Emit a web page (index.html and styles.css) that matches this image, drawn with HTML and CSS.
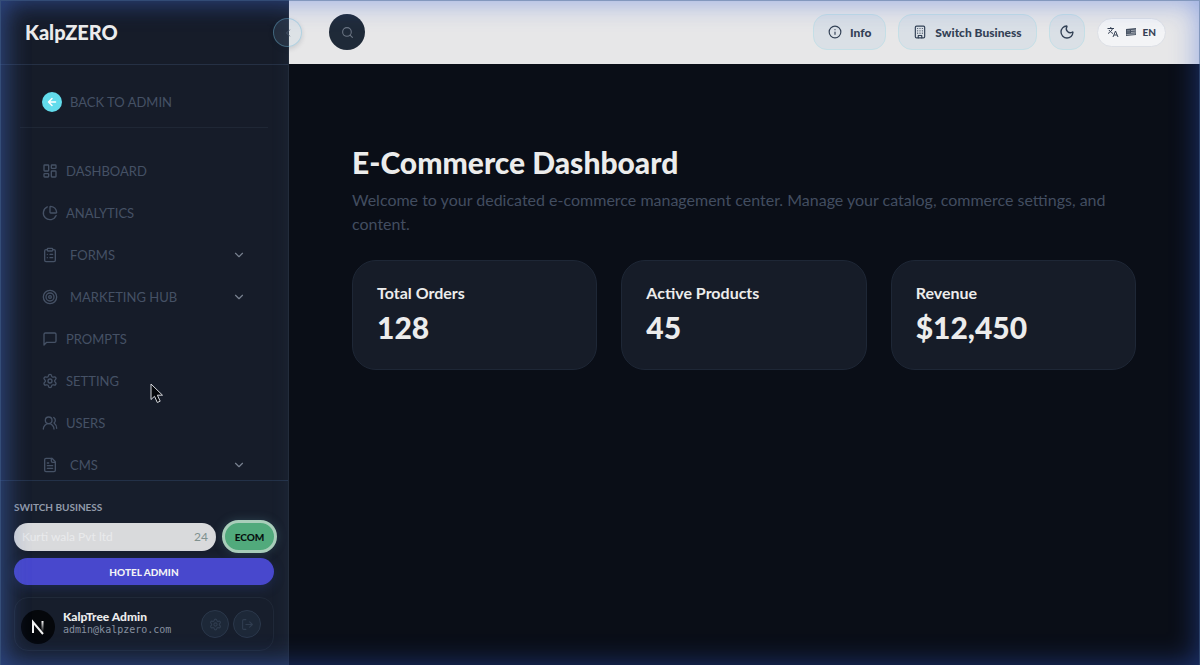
FILE: index.html
```html
<!DOCTYPE html>
<html lang="en">
<head>
<meta charset="utf-8">
<meta name="viewport" content="width=device-width, initial-scale=1">
<title>E-Commerce Dashboard</title>
<link rel="stylesheet" href="styles.css">
</head>
<body>
<div class="app">
  <aside class="sidebar">
    <div class="brand-bar">
      <a class="brand" href="#">KalpZERO</a>
      <button class="collapse" type="button" aria-label="Collapse sidebar"><svg class="icon icon-xs" viewBox="0 0 24 24"><path d="m15 18-6-6 6-6"/></svg></button>
    </div>
    <nav class="nav" aria-label="Main">
      <div class="nav-back">
        <a class="back-link" href="#"><span class="back-dot"><svg class="icon icon-xs" viewBox="0 0 24 24"><path d="m12 19-7-7 7-7M19 12H5"/></svg></span>BACK TO ADMIN</a>
      </div>
      <div class="nav-list">
        <a class="nav-item" href="#"><svg class="icon" viewBox="0 0 24 24"><rect width="7" height="9" x="3" y="3" rx="1"/><rect width="7" height="5" x="14" y="3" rx="1"/><rect width="7" height="9" x="14" y="12" rx="1"/><rect width="7" height="5" x="3" y="16" rx="1"/></svg>DASHBOARD</a>
        <a class="nav-item" href="#"><svg class="icon" viewBox="0 0 24 24"><path d="M21 12c.55 0 1-.45.95-1a10 10 0 0 0-8.95-8.95c-.55-.05-1 .4-1 .95v8a1 1 0 0 0 1 1z"/><path d="M21.21 15.89A10 10 0 1 1 8 2.83"/></svg>ANALYTICS</a>
        <button class="nav-item nav-group" type="button"><svg class="icon" viewBox="0 0 24 24"><rect width="8" height="4" x="8" y="2" rx="1"/><path d="M16 4h2a2 2 0 0 1 2 2v14a2 2 0 0 1-2 2H6a2 2 0 0 1-2-2V6a2 2 0 0 1 2-2h2M12 11h4M12 16h4M8 11h.01M8 16h.01"/></svg>FORMS<svg class="icon chevron" viewBox="0 0 24 24"><path d="m6 9 6 6 6-6"/></svg></button>
        <button class="nav-item nav-group" type="button"><svg class="icon" viewBox="0 0 24 24"><circle cx="12" cy="12" r="10"/><circle cx="12" cy="12" r="6"/><circle cx="12" cy="12" r="2"/></svg>MARKETING HUB<svg class="icon chevron" viewBox="0 0 24 24"><path d="m6 9 6 6 6-6"/></svg></button>
        <a class="nav-item" href="#"><svg class="icon" viewBox="0 0 24 24"><path d="M21 15a2 2 0 0 1-2 2H7l-4 4V5a2 2 0 0 1 2-2h14a2 2 0 0 1 2 2z"/></svg>PROMPTS</a>
        <a class="nav-item" href="#"><svg class="icon" viewBox="0 0 24 24"><path d="M9.67 4.14a2.34 2.34 0 0 1 4.66 0 2.34 2.34 0 0 0 3.32 1.91 2.34 2.34 0 0 1 2.33 4.04 2.34 2.34 0 0 0 0 3.82 2.34 2.34 0 0 1-2.33 4.04 2.34 2.34 0 0 0-3.32 1.91 2.34 2.34 0 0 1-4.66 0 2.34 2.34 0 0 0-3.32-1.91 2.34 2.34 0 0 1-2.33-4.04 2.34 2.34 0 0 0 0-3.82 2.34 2.34 0 0 1 2.33-4.04 2.34 2.34 0 0 0 3.32-1.91"/><circle cx="12" cy="12" r="3"/></svg>SETTING</a>
        <a class="nav-item" href="#"><svg class="icon" viewBox="0 0 24 24"><path d="M18 21a8 8 0 0 0-16 0"/><circle cx="10" cy="8" r="5"/><path d="M22 20c0-3.37-2-6.5-4-8a5 5 0 0 0-.45-8.3"/></svg>USERS</a>
        <button class="nav-item nav-group" type="button"><svg class="icon" viewBox="0 0 24 24"><path d="M15 2H6a2 2 0 0 0-2 2v16a2 2 0 0 0 2 2h12a2 2 0 0 0 2-2V7z"/><path d="M14 2v4a2 2 0 0 0 2 2h4M10 9H8M16 13H8M16 17H8"/></svg>CMS<svg class="icon chevron" viewBox="0 0 24 24"><path d="m6 9 6 6 6-6"/></svg></button>
      </div>
    </nav>
    <div class="side-foot">
      <label class="switch-label" for="business">SWITCH BUSINESS</label>
      <div class="switch-row">
        <div class="business-field">
          <input class="business-input" id="business" type="text" value="Kurti wala Pvt ltd">
          <span class="business-count">24</span>
        </div>
        <button class="ecom" type="button">ECOM</button>
      </div>
      <button class="hotel" type="button">HOTEL ADMIN</button>
      <div class="user-card">
        <svg class="avatar" viewBox="0 0 34 34" aria-hidden="true">
          <defs><linearGradient id="fade" x1="0" y1="0" x2="0" y2="1"><stop offset="0" stop-color="#fff"/><stop offset="1" stop-color="#fff" stop-opacity="0"/></linearGradient></defs>
          <circle cx="17" cy="17" r="17" fill="#05070b"/>
          <path d="M12 23V12L22 24" fill="none" stroke="#f2f2f2" stroke-width="2"/>
          <path d="M20.500 11h2v11h-2z" fill="url(#fade)"/>
        </svg>
        <div class="user-text">
          <div class="user-name">KalpTree Admin</div>
          <div class="user-mail">admin@kalpzero.com</div>
        </div>
        <button class="round-btn" type="button" aria-label="Account settings"><svg class="icon icon-sm" viewBox="0 0 24 24"><path d="M9.67 4.14a2.34 2.34 0 0 1 4.66 0 2.34 2.34 0 0 0 3.32 1.91 2.34 2.34 0 0 1 2.33 4.04 2.34 2.34 0 0 0 0 3.82 2.34 2.34 0 0 1-2.33 4.04 2.34 2.34 0 0 0-3.32 1.91 2.34 2.34 0 0 1-4.66 0 2.34 2.34 0 0 0-3.32-1.91 2.34 2.34 0 0 1-2.33-4.04 2.34 2.34 0 0 0 0-3.82 2.34 2.34 0 0 1 2.33-4.04 2.34 2.34 0 0 0 3.32-1.91"/><circle cx="12" cy="12" r="3"/></svg></button>
        <button class="round-btn" type="button" aria-label="Log out"><svg class="icon icon-sm" viewBox="0 0 24 24"><path d="M9 21H5a2 2 0 0 1-2-2V5a2 2 0 0 1 2-2h4M16 17l5-5-5-5M21 12H9"/></svg></button>
      </div>
    </div>
  </aside>
  <div class="content">
    <header class="topbar">
      <button class="search" type="button" aria-label="Search"><svg class="icon icon-sm" viewBox="0 0 24 24"><circle cx="11" cy="11" r="8"/><path d="m21 21-4.300-4.300"/></svg></button>
      <div class="actions">
        <button class="pill" type="button"><svg class="icon" viewBox="0 0 24 24"><circle cx="12" cy="12" r="10"/><path d="M12 16v-4M12 8h.01"/></svg>Info</button>
        <button class="pill" type="button"><svg class="icon" viewBox="0 0 24 24"><rect x="4" y="2" width="16" height="20" rx="2"/><path d="M9 22v-4h6v4M8 6h.01M12 6h.01M16 6h.01M8 10h.01M12 10h.01M16 10h.01M8 14h.01M12 14h.01M16 14h.01"/></svg>Switch Business</button>
        <button class="pill pill-icon" type="button" aria-label="Dark mode"><svg class="icon" viewBox="0 0 24 24"><path d="M20.985 12.486a9 9 0 1 1-9.473-9.472c.405-.022.617.46.402.803a6 6 0 0 0 8.268 8.268c.344-.215.825-.004.803.401"/></svg></button>
        <button class="lang" type="button">
          <svg class="lang-icon" viewBox="0 0 24 24"><path d="M1 5h13M7.500 2v3M11 5C10 9 6 13 2 15M4 8c2 3 4 5 8 7M12 22l5-12 5 12M14 18h6"/></svg>
          <svg class="flag" viewBox="0 0 12 10" aria-hidden="true"><path d="M1 2 11 1v7L1 9z" fill="#475262"/><path d="M6 3.500 11 3M6 5.500 11 5M1.500 7.500 10.500 6.800" stroke="#c9cdd3" stroke-width=".7"/><path d="M2 3.500h3M2 5h3" stroke="#8c95a3" stroke-width=".6"/></svg>
          EN</button>
      </div>
    </header>
    <main class="main">
      <h1 class="title">E-Commerce Dashboard</h1>
      <p class="intro">Welcome to your dedicated e-commerce management center. Manage your catalog, commerce settings, and content.</p>
      <div class="cards">
        <section class="card"><h2 class="card-label">Total Orders</h2><p class="card-value">128</p></section>
        <section class="card"><h2 class="card-label">Active Products</h2><p class="card-value">45</p></section>
        <section class="card"><h2 class="card-label">Revenue</h2><p class="card-value">$12,450</p></section>
      </div>
    </main>
  </div>
</div>
<div class="glow"></div>
<svg class="pointer" viewBox="0 0 14 21" aria-hidden="true"><path d="M1 1v15.500l3.500-3.200 2.800 6.200 2.900-1.300-2.800-6H12.500z" fill="#05070b" stroke="#d5d7dc" stroke-width="1"/></svg>
</body>
</html>
```
FILE: styles.css
```css
* { box-sizing: border-box; }
body {
  margin: 0;
  background: #0a0e17;
  color: #ececec;
  font-family: Lato, "Liberation Sans", sans-serif;
  font-size: 13px;
}
button, input { font: inherit; margin: 0; }
button { cursor: pointer; }
a { color: inherit; text-decoration: none; }
h1, h2, p { margin: 0; }

.icon {
  width: 16px;
  height: 16px;
  flex: none;
  fill: none;
  stroke: currentColor;
  stroke-width: 2;
  stroke-linecap: round;
  stroke-linejoin: round;
}
.icon-sm { width: 13px; height: 13px; }
.icon-xs { width: 12px; height: 12px; }

.app { display: flex; min-height: 100vh; }

/* Sidebar */
.sidebar {
  position: sticky;
  top: 0;
  z-index: 2;
  display: flex;
  flex-direction: column;
  flex: none;
  width: 289px;
  height: 100vh;
  background: #161c29;
  border-right: 1px solid #232c3b;
}
.sidebar::after {
  content: "";
  position: absolute;
  inset: 0;
  box-shadow: inset 8px 0 24px rgba(95, 125, 160, .24);
  pointer-events: none;
}
.brand-bar {
  position: relative;
  display: flex;
  align-items: center;
  flex: none;
  height: 65px;
  padding: 0 25px;
  border-bottom: 1px solid #253044;
}
.brand { font-size: 20px; font-weight: 900; line-height: 24px; }
.collapse {
  position: absolute;
  top: 18px;
  right: -14px;
  display: grid;
  place-items: center;
  width: 29px;
  height: 29px;
  padding: 0;
  border: 1px solid rgba(110, 185, 215, .4);
  border-radius: 50%;
  background: rgba(150, 190, 225, .12);
  box-shadow: 0 2px 5px rgba(15, 25, 45, .15);
  color: #475569;
}
.nav { flex: 1; min-height: 0; overflow: hidden; padding: 18px 20px 0; }
.nav-back { height: 45px; border-bottom: 1px solid #1f2735; }
.back-link {
  display: flex;
  align-items: center;
  gap: 8px;
  height: 38px;
  padding: 0 22px;
  color: #455165;
}
.back-dot {
  display: grid;
  place-items: center;
  width: 20px;
  height: 20px;
  border-radius: 50%;
  background: #62dcec;
  color: #fff;
}
.back-dot .icon { stroke-width: 3; }
.nav-list { display: flex; flex-direction: column; padding-top: 22px; }
.nav-item {
  display: flex;
  align-items: center;
  gap: 8px;
  flex: none;
  height: 42px;
  padding: 0 22px;
  border: 0;
  background: none;
  color: #455165;
  text-align: left;
}
.nav-group { gap: 12px; }
.chevron { width: 14px; height: 14px; margin-left: auto; color: #78818f; }

.side-foot {
  display: flex;
  flex-direction: column;
  flex: none;
  padding: 19px 14px 14px;
  border-top: 1px solid #233148;
  background: #171e2c;
}
.switch-label {
  font-size: 10px;
  font-weight: 700;
  line-height: 14px;
  color: #929baa;
}
.switch-row {
  display: flex;
  align-items: center;
  gap: 6px;
  margin-top: 6px;
  margin-right: -3px;
}
.business-field {
  display: flex;
  align-items: center;
  flex: 1;
  min-width: 0;
  height: 28px;
  padding: 0 8px;
  border-radius: 14px;
  background: #d9dadc;
  font-size: 12px;
}
.business-input {
  flex: 1;
  min-width: 0;
  padding: 0;
  border: 0;
  outline: 0;
  background: none;
  color: #e9eaec;
}
.business-count { color: #80918f; }
.ecom {
  width: 55px;
  height: 33px;
  padding: 0;
  border: 3px solid #a9ceba;
  border-radius: 17px;
  background: #51aa7c;
  box-shadow: 0 0 10px rgba(81, 130, 140, .35);
  color: #07100f;
  font-size: 10px;
  font-weight: 900;
}
.hotel {
  height: 27px;
  margin-top: 5px;
  border: 0;
  border-radius: 14px;
  background: #4848cd;
  box-shadow: 0 3px 12px rgba(50, 80, 180, .25);
  color: #f2f2f5;
  font-size: 10px;
  font-weight: 900;
}
.user-card {
  display: flex;
  align-items: center;
  gap: 4px;
  height: 54px;
  margin-top: 12px;
  padding: 0 12px 0 6px;
  border: 1px solid #202938;
  border-radius: 14px;
}
.avatar { flex: none; width: 34px; height: 34px; margin-top: 6px; }
.user-text { flex: 1; min-width: 0; padding: 0 0 2px 4px; }
.user-name { font-size: 12px; font-weight: 900; line-height: 14px; }
.user-mail {
  font-family: "DejaVu Sans Mono", monospace;
  font-size: 10px;
  line-height: 12px;
  color: #8690a0;
}
.round-btn {
  display: grid;
  place-items: center;
  flex: none;
  width: 28px;
  height: 28px;
  padding: 0;
  border: 1px solid #2b384b;
  border-radius: 50%;
  background: #1d2838;
  color: #303d50;
}

/* Top bar */
.content { flex: 1; min-width: 0; }
.topbar {
  display: flex;
  align-items: center;
  justify-content: space-between;
  height: 64px;
  padding: 0 34px 0 40px;
  background: #e7e7e8;
}
.search {
  display: grid;
  place-items: center;
  width: 36px;
  height: 36px;
  padding: 0;
  border: 0;
  border-radius: 50%;
  background: #1f2a38;
  color: #6b7583;
}
.actions { display: flex; align-items: center; gap: 12px; }
.pill {
  display: flex;
  align-items: center;
  gap: 8px;
  height: 36px;
  padding: 0 14px;
  border: 1px solid #c5dfe6;
  border-radius: 14px;
  background: #dae0e6;
  color: #334155;
  font-size: 12px;
  font-weight: 900;
}
.pill .icon { width: 14px; height: 14px; }
.pill-icon { justify-content: center; width: 36px; padding: 0; }
.pill-icon .icon { width: 16px; height: 16px; }
.lang {
  display: flex;
  align-items: center;
  gap: 6px;
  height: 29px;
  padding: 0 9px;
  border: 1px solid #dcdfe5;
  border-radius: 15px;
  background: #f3f4f6;
  color: #364255;
  font-size: 10px;
  font-weight: 900;
}
.lang-icon { width: 12px; height: 12px; fill: none; stroke: currentColor; stroke-width: 2; }
.flag { width: 12px; height: 10px; }

/* Dashboard */
.main { padding: 79px 64px 40px 63px; }
.title { font-size: 30px; font-weight: 900; line-height: 38px; }
.intro { margin-top: 7px; font-size: 16px; line-height: 24px; color: #424d60; }
.cards {
  display: grid;
  grid-template-columns: repeat(3, 1fr);
  gap: 24px;
  margin-top: 24px;
}
.card {
  padding: 20px 24px 24px;
  border: 1px solid #1e2736;
  border-radius: 24px;
  background: #161c28;
}
.card-label { font-size: 16px; font-weight: 700; line-height: 24px; }
.card-value { margin-top: 4px; font-size: 30px; font-weight: 900; line-height: 36px; }

/* Blue light around the window edge */
.glow {
  position: fixed;
  inset: 0;
  z-index: 5;
  border: 1px solid rgba(65, 100, 160, .6);
  border-bottom-width: 0;
  box-shadow: inset 0 0 28px rgba(50, 95, 220, .48);
  pointer-events: none;
}
.pointer {
  position: fixed;
  left: 150px;
  top: 383px;
  z-index: 6;
  width: 14px;
  height: 21px;
  pointer-events: none;
}
```
